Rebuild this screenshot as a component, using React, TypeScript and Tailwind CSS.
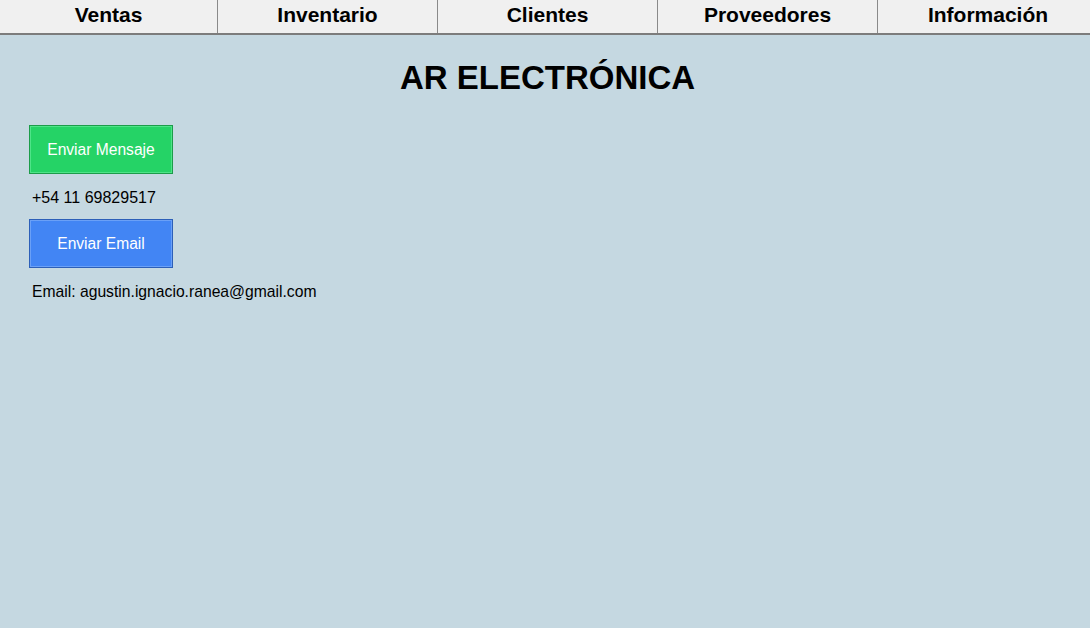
const tabs = ['Ventas', 'Inventario', 'Clientes', 'Proveedores', 'Información']

export default function App() {
	return (
		<div className="min-h-[628px] overflow-hidden bg-[#c5d8e1] font-['Liberation_Sans',Arial,sans-serif] text-black">
			<nav className="flex h-[35px] border-b-2 border-[#7c7c7c] bg-[#f0f0f0]">
				{tabs.map((t, i) => (
					<div
						key={t}
						className={`flex shrink-0 items-start justify-center pt-[3px] text-[21px] font-bold leading-[24px] ${i === 0 ? 'w-[218px]' : 'w-[220px]'} ${i < tabs.length - 1 ? 'border-r border-[#8a8a8a]' : ''}`}
					>
						{t}
					</div>
				))}
			</nav>

			<h1 className="mt-[24px] pl-[5px] text-center text-[33px] font-bold leading-[38px]">AR ELECTRÓNICA</h1>

			<div className="flex flex-col items-start pl-[29px] pt-[28px]">
				<button
					type="button"
					className="h-[49px] w-[144px] border border-[#1c9c4a] bg-[#25d366] text-[15.6px] text-white shadow-[inset_0_0_0_1px_#4ee488]"
				>
					Enviar Mensaje
				</button>
				<p className="ml-[3px] mt-[14px] text-[16px] leading-[20px]">+54 11 69829517</p>
				<button
					type="button"
					className="mt-[11px] h-[49px] w-[144px] border border-[#2c5fb8] bg-[#4285f4] text-[15.6px] text-white shadow-[inset_0_0_0_1px_#6aa0f7]"
				>
					Enviar Email
				</button>
				<p className="ml-[3px] mt-[14px] text-[15.7px] leading-[20px]">Email: agustin.ignacio.ranea@gmail.com</p>
			</div>
		</div>
	)
}
